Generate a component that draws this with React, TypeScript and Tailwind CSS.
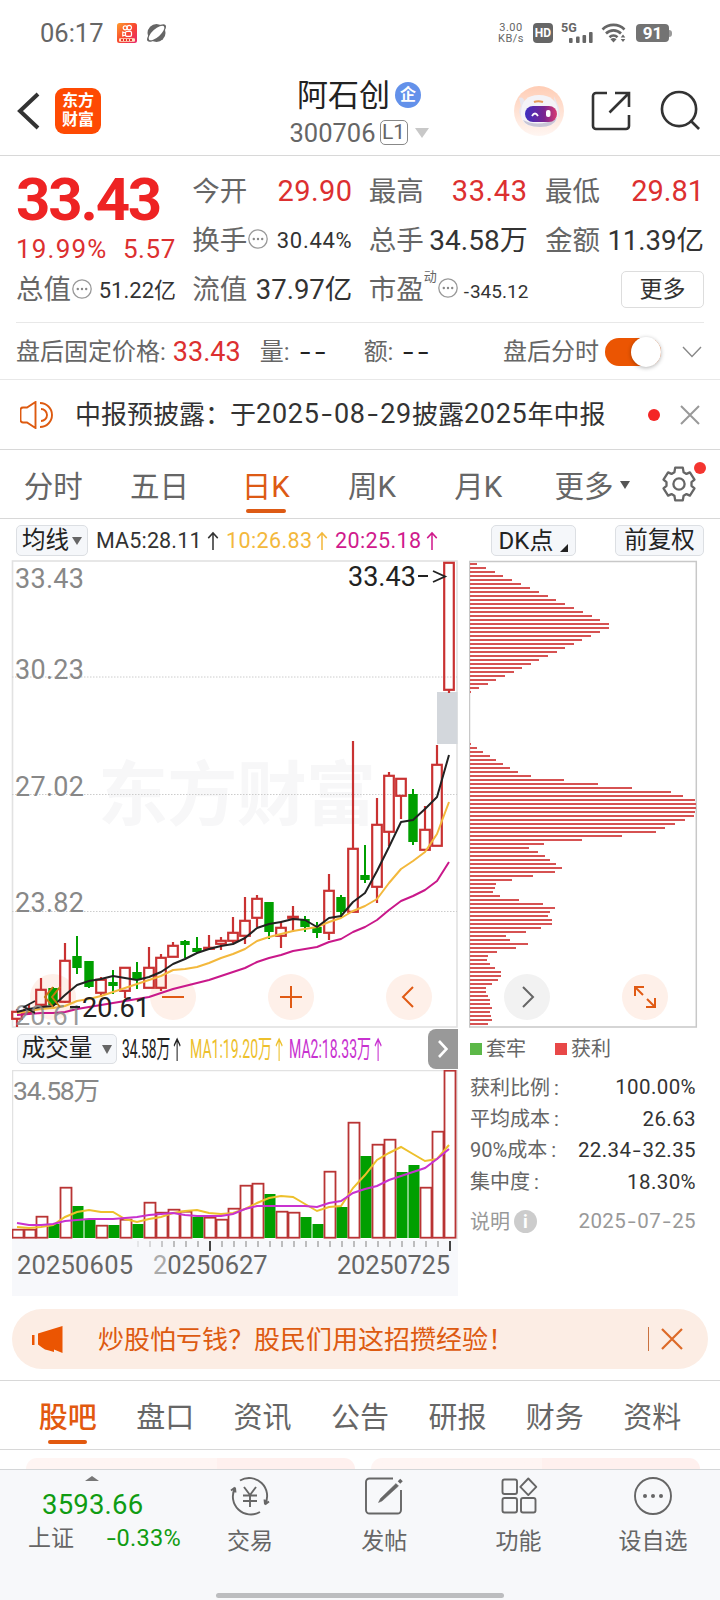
import React, { useState } from "react";
import type { ReactNode } from "react";

type Candle = [high: number, top: number, bottom: number, low: number, up: 0 | 1];

// daily candles, y values on the chart canvas
const candles: Candle[] = [
  [1009, 1011, 1019, 1027, 1], [1004, 1009, 1013, 1015, 1], [978, 989, 1005, 1006, 1], [987, 988, 1005, 1006, 0],
  [943, 960, 1002, 1003, 1], [936, 956, 968, 974, 0], [961, 961, 987, 988, 0], [977, 979, 993, 997, 1],
  [970, 982, 986, 994, 0], [967, 967, 991, 998, 1], [962, 972, 980, 989, 0], [947, 967, 988, 988, 1],
  [954, 957, 988, 991, 1], [942, 945, 957, 957, 1], [940, 941, 945, 958, 0], [937, 948, 952, 953, 0],
  [935, 947, 949, 950, 1], [937, 940, 944, 950, 1], [917, 932, 941, 943, 1], [897, 920, 936, 944, 1],
  [895, 898, 918, 927, 1], [902, 902, 932, 939, 0], [921, 927, 936, 948, 1], [906, 916, 918, 932, 1],
  [916, 919, 927, 932, 0], [922, 927, 933, 938, 0], [874, 890, 933, 940, 1], [895, 897, 912, 917, 0],
  [741, 848, 912, 912, 1], [845, 875, 880, 883, 0], [798, 824, 887, 903, 1], [772, 775, 832, 846, 1],
  [778, 778, 796, 819, 1], [789, 794, 842, 845, 0], [806, 829, 850, 850, 1], [745, 764, 846, 846, 1],
  [562, 562, 690, 693, 1],
];

const ma5 = [1012, 1009, 1007, 1006, 995, 985, 981, 979, 976, 978, 980, 977, 972, 964, 959, 953, 949, 946, 944, 938, 928, 924, 922, 919, 920, 927, 918, 916, 902, 893, 871, 847, 822, 820, 809, 797, 755];
const ma10 = [1013, 1011, 1009, 1008, 1006, 1001, 999, 996, 992, 988, 984, 980, 976, 970, 969, 967, 963, 958, 954, 949, 941, 937, 934, 931, 929, 927, 922, 918, 911, 906, 899, 883, 869, 861, 852, 834, 802];
const ma20 = [1015, 1014, 1013, 1013, 1012, 1009, 1007, 1005, 1003, 1001, 999, 997, 993, 989, 986, 983, 980, 976, 972, 968, 962, 958, 955, 951, 949, 947, 942, 939, 932, 927, 920, 910, 901, 896, 890, 881, 862];

// cost distribution, one bar every 4px from the top
const chips = [
  7, 16, 25, 33, 42, 51, 60, 69, 78, 86, 95, 104, 113, 122, 130, 139, 139, 130, 121, 112, 104, 95, 87, 78, 69, 61, 52, 44, 35, 26, 18, 9,
  1, 0, 0, 0, 0, 0, 0, 0, 0, 0, 0, 0, 0, 1,
  7, 13, 20, 26, 33, 40, 48, 61, 94, 128, 162, 201, 213, 225, 226, 226, 225, 224, 215, 205, 195, 186, 152, 112, 74, 59, 68, 75, 80, 86, 92, 85, 63, 42,
  26, 25, 23, 30, 49, 73, 85, 80, 78, 82, 82, 71, 56, 36, 40, 58, 46, 27, 18, 17, 20, 25, 31, 31, 28, 22, 16, 16, 18, 20, 20, 22, 20, 21, 22, 18,
];

// volume bars, height above the base line
const volumes = [9, 9, 22, 14, 51, 32, 18, 13, 13, 19, 14, 36, 26, 29, 27, 21, 21, 19, 30, 53, 55, 44, 27, 26, 21, 14, 67, 31, 116, 82, 94, 99, 66, 73, 51, 107, 168];
const volGreen = [3, 5, 6, 8, 10, 15, 21, 24, 25, 27, 29, 32, 33];
const volMa1 = [11, 10, 11, 13, 21, 26, 28, 26, 26, 19, 16, 19, 21, 25, 27, 28, 25, 24, 25, 29, 35, 40, 42, 41, 34, 27, 31, 32, 50, 63, 78, 85, 91, 84, 77, 79, 93];
const volMa2 = [15, 13, 13, 14, 17, 18, 19, 19, 19, 20, 21, 23, 24, 25, 23, 22, 22, 22, 24, 29, 32, 32, 32, 32, 32, 31, 35, 37, 45, 49, 52, 58, 62, 66, 70, 79, 89];

const toPoints = (ys: number[], x0: number) => ys.map((y, i) => `${x0 + i * 12},${y}`).join(" ");

function MoreDots() {
  return (
    <svg className="w-5 h-5 shrink-0 -mt-[3px] ml-px" viewBox="0 0 20 20">
      <circle cx="10" cy="10" r="9.2" fill="none" stroke="#999" strokeWidth="1.3" />
      <circle cx="5.800" cy="10" r="1.200" fill="#888" />
      <circle cx="10" cy="10" r="1.200" fill="#888" />
      <circle cx="14.200" cy="10" r="1.200" fill="#888" />
    </svg>
  );
}

function StatusBar() {
  return (
    <div className="h-[66px] flex items-center pl-[40px] pr-[48px] text-[#666]">
      <span className="text-[25.500px] leading-none pt-0.5">06:17</span>
      <svg className="w-5 h-5 ml-[13px]" viewBox="0 0 20 20">
        <defs>
          <linearGradient id="ks" x1="0" y1="0" x2="1" y2="1">
            <stop offset="0" stopColor="#ff9d2e" />
            <stop offset="0.5" stopColor="#f8492f" />
            <stop offset="1" stopColor="#e8256e" />
          </linearGradient>
        </defs>
        <rect width="20" height="20" rx="2.500" fill="url(#ks)" />
        <g fill="none" stroke="#fff" strokeWidth="1.200">
          <circle cx="8.200" cy="4.800" r="2" />
          <circle cx="12.200" cy="4.600" r="2.300" />
          <rect x="8.500" y="8.400" width="6" height="5" rx="1.400" />
          <path d="M8.500 10 5.800 9v4l2.700-1" />
        </g>
        <rect x="2" y="15.200" width="16" height="3.600" rx="1" fill="#ffe4c4" />
        <path d="M4 17h12" stroke="#e8352e" strokeWidth="2" strokeDasharray="2 1" />
      </svg>
      <svg className="w-[21px] h-5 ml-[9px]" viewBox="0 0 21 20">
        <circle cx="10.500" cy="10" r="9" fill="#666" />
        <ellipse cx="10.500" cy="10" rx="12" ry="4.800" transform="rotate(-42 10.500 10)" fill="#666" />
        <ellipse cx="10.500" cy="10" rx="10" ry="4" transform="rotate(-42 10.500 10)" fill="#fff" />
      </svg>
      <div className="ml-auto flex items-center">
        <div className="text-[11px] leading-[11px] text-center tracking-[0.500px]">
          <div>3.00</div>
          <div>KB/s</div>
        </div>
        <div className="ml-[9px] w-5 h-5 rounded-[4px] bg-[#666] text-white text-[12px] font-bold flex items-center justify-center leading-none">HD</div>
        <div className="ml-2 relative w-[32px] h-5">
          <span className="absolute left-0 -top-[1px] text-[12.500px] leading-none font-bold">5G</span>
          <svg className="absolute inset-0 w-[32px] h-5" viewBox="0 0 32 20" fill="#666">
            <rect x="8" y="15" width="3.600" height="5" rx="1" />
            <rect x="15" y="13.500" width="3.600" height="6.500" rx="1" />
            <rect x="21.500" y="12" width="3.600" height="8" rx="1" />
            <rect x="28" y="9" width="3.600" height="11" rx="1" />
          </svg>
        </div>
        <svg className="ml-[8px] w-[26px] h-5" viewBox="0 0 26 20">
          <g fill="none" stroke="#666" strokeWidth="2.600">
            <path d="M1.500 6.500a15.500 15.500 0 0 1 22 0" />
            <path d="M5 10.500a10.500 10.500 0 0 1 15 0" />
            <path d="M8.500 14.200a5.800 5.800 0 0 1 8 0" />
          </g>
          <path d="m12.500 19.500-3-3.200a4.500 4.500 0 0 1 6 0z" fill="#666" />
          <path d="m22 11.500 2.300 3h-4.600zM22 19l2.300-3h-4.600z" fill="#666" />
        </svg>
        <div className="ml-[9px] w-[33px] h-[18px] rounded-[4px] bg-[#737373] text-white text-[17px] font-bold flex items-center justify-center leading-none">91</div>
        <div className="w-[3px] h-[7px] bg-[#999] rounded-r-sm" />
      </div>
    </div>
  );
}

function Header() {
  return (
    <div className="h-[90px] border-b border-[#d8d8d8] flex items-center">
      <div className="flex-1 flex items-center pl-[17px]">
        <svg className="w-[24px] h-[38px]" viewBox="0 0 24 38">
          <path d="M21 2 3 19l18 17" fill="none" stroke="#333" strokeWidth="4" />
        </svg>
        <div className="ml-[14px] w-[46px] h-[46px] rounded-[9px] bg-[#fe4a03] text-white text-[16px] leading-[18.500px] font-bold text-center flex flex-col justify-center">
          <div>东方</div>
          <div>财富</div>
        </div>
      </div>
      <div className="flex flex-col items-center pt-[6px]">
        <div className="flex items-center h-[38px]">
          <span className="text-[31px] leading-none pt-0.5 text-[#222]">阿石创</span>
          <span className="ml-[5px] w-[26px] h-[26px] rounded-full bg-[#6391ea] text-white text-[16px] font-bold flex items-center justify-center leading-none">企</span>
        </div>
        <div className="flex items-center h-[38px]">
          <span className="text-[25.500px] leading-none pt-0.5 text-[#666]">300706</span>
          <span className="ml-[4px] w-[28px] h-[25px] rounded-[5px] border border-[#888] text-[#666] text-[21px] leading-none flex items-center justify-center">L1</span>
          <svg className="ml-[7px] w-[14px] h-[10px]" viewBox="0 0 14 10"><path d="M0 0h14L7 10z" fill="#c8c8c8" /></svg>
        </div>
      </div>
      <div className="flex-1 flex items-center justify-end pr-[19px]">
        <svg className="w-[50px] h-[50px]" viewBox="0 0 50 50">
          <defs>
            <linearGradient id="botBg" x1="0" y1="0" x2="0" y2="1">
              <stop offset="0" stopColor="#ffcdb5" />
              <stop offset="1" stopColor="#fff6f2" />
            </linearGradient>
            <linearGradient id="visor">
              <stop offset="0" stopColor="#3d2fc0" />
              <stop offset="0.6" stopColor="#7a2590" />
              <stop offset="1" stopColor="#d83a72" />
            </linearGradient>
          </defs>
          <circle cx="25" cy="25" r="25" fill="url(#botBg)" />
          <path d="M5 12q4-2 6 4L8 32q-5-6-1-12zM40 10l5 12 1 10-5-6z" fill="#e9e6ee" />
          <path d="M7 28c0-13 6-19 18-19s19 6 19 19c0 9-7 13-19 13S7 37 7 28z" fill="#f4f3f7" />
          <path d="M9 34q16 8 34-2-3 9-17 9t-17-7z" fill="#c9c6d6" />
          <rect x="11" y="20" width="32" height="16" rx="8" fill="url(#visor)" />
          <path d="M18 30q3-5 6 0" fill="none" stroke="#fff" strokeWidth="1.800" />
          <rect x="32" y="24" width="4.500" height="7" rx="2" fill="#fff" />
          <path d="M20 16q4-1.500 9 0" stroke="#e79a5a" strokeWidth="2.200" fill="none" />
        </svg>
        <svg className="ml-[27px] w-[40px] h-[40px]" viewBox="0 0 40 40" fill="none" stroke="#333" strokeWidth="2.600">
          <path d="M16 2H5a3 3 0 0 0-3 3v30a3 3 0 0 0 3 3h30a3 3 0 0 0 3-3V24" />
          <path d="M24 2h14v14M38 2 18.500 21.500" />
        </svg>
        <svg className="ml-[29px] w-[41px] h-[41px]" viewBox="0 0 42 42" fill="none" stroke="#333" strokeWidth="2.700">
          <circle cx="19.500" cy="19.500" r="17.500" />
          <path d="m31 31 9 9" />
        </svg>
      </div>
    </div>
  );
}

function QuoteRow({ label, children }: { label: ReactNode; children: ReactNode }) {
  return (
    <div className="h-[49px] flex items-center whitespace-nowrap">
      <span className="text-[27.500px] leading-none text-[#666]">{label}</span>
      {children}
    </div>
  );
}

function Quote() {
  return (
    <div className="mx-4 h-[167px] pt-[11px] border-b border-[#e8e8e8] flex justify-between">
      <div className="w-[160px] whitespace-nowrap">
        <div className="h-[66px] flex items-center text-[60px] leading-none font-bold tracking-[-2.200px] text-[#ee2323]">33.43</div>
        <div className="h-[32px] flex items-center justify-between text-[26px] leading-none text-[#dc3030]">
          <span className="tracking-[1.200px]">19.99%</span>
          <span className="tracking-[0.600px]">5.57</span>
        </div>
        <div className="h-[50px] flex items-center">
          <span className="text-[27.500px] leading-none text-[#666]">总值</span>
          <MoreDots />
          <span className="ml-auto text-[22px] leading-none pt-0.5 text-[#333]">51.22亿</span>
        </div>
      </div>
      <div className="w-[160px]">
        <QuoteRow label="今开"><span className="ml-auto text-[29px] leading-none tracking-[0.400px] text-[#dc3030]">29.90</span></QuoteRow>
        <QuoteRow label="换手"><MoreDots /><span className="ml-auto text-[22px] leading-none tracking-[0.700px] text-[#333]">30.44%</span></QuoteRow>
        <QuoteRow label="流值"><span className="ml-auto text-[27.500px] leading-none text-[#333]">37.97亿</span></QuoteRow>
      </div>
      <div className="w-[160px]">
        <QuoteRow label="最高"><span className="ml-auto mr-px text-[29px] leading-none tracking-[0.600px] text-[#dc3030]">33.43</span></QuoteRow>
        <QuoteRow label="总手"><span className="ml-auto mr-px text-[28px] leading-none text-[#333]">34.58万</span></QuoteRow>
        <QuoteRow label="市盈">
          <span className="self-start mt-[5px] text-[13px] leading-none text-[#666]">动</span>
          <MoreDots />
          <span className="ml-[6px] text-[19px] leading-none text-[#333] mt-1">
            <span className="pr-px">-</span>345.12
          </span>
        </QuoteRow>
      </div>
      <div className="w-[159px]">
        <QuoteRow label="最低"><span className="ml-auto text-[29px] leading-none text-[#dc3030]">29.81</span></QuoteRow>
        <QuoteRow label="金额"><span className="ml-auto text-[27.500px] leading-none text-[#333]">11.39亿</span></QuoteRow>
        <div className="h-[49px] flex items-center justify-end">
          <button className="w-[83px] h-[37px] rounded-[5px] border border-[#ddd] text-[23px] leading-none text-[#333]">更多</button>
        </div>
      </div>
    </div>
  );
}

function Blank({ className = "" }: { className?: string }) {
  return (
    <span className={`ml-[10px] text-[27px] leading-none text-[#222] whitespace-nowrap ${className}`}>
      <span className="inline-block scale-x-140 origin-left w-[15px]">-</span>
      <span className="inline-block scale-x-140 origin-left">-</span>
    </span>
  );
}

function AfterHours() {
  const [on, setOn] = useState(true);
  return (
    <div className="h-[57px] border-b border-[#e8e8e8] pl-4 pr-[18px] pt-0.5 flex items-center text-[24px] leading-none text-[#666] whitespace-nowrap">
      <span>盘后固定价格:</span>
      <span className="ml-[7px] w-[87px] text-[27px] leading-none text-[#dc3030]">33.43</span>
      <span>量:</span>
      <Blank className="w-[64px]" />
      <span>额:</span>
      <Blank />
      <span className="ml-auto">盘后分时</span>
      <button onClick={() => setOn(!on)} className={`ml-[6px] w-[56px] h-[28px] rounded-full flex items-center ${on ? "bg-[#eb5502] justify-end" : "bg-[#ccc] justify-start"}`}>
        <span className="w-[30px] h-[30px] rounded-full bg-white shadow-[0_1px_4px_rgba(0,0,0,0.3)]" />
      </button>
      <svg className="ml-[21px] w-5 h-3" viewBox="0 0 20 12"><path d="m1 1 9 9.500L19 1" fill="none" stroke="#888" strokeWidth="1.400" /></svg>
    </div>
  );
}

function Notice() {
  return (
    <div className="h-[70px] border-b border-[#d8d8d8] pl-5 pr-5 flex items-center whitespace-nowrap text-[26px] leading-none text-[#333]">
      <svg className="w-[34px] h-[28px]" viewBox="0 0 34 28" fill="none" stroke="#dd5a10" strokeWidth="1.900">
        <path d="M15.500 1v26L7 21.500H3a2.500 2.500 0 0 1-2.500-2.500V9A2.500 2.500 0 0 1 3 6.500h4z" />
        <path d="M21 8a6 6 0 0 1 0 12M20 2a12 12 0 0 1 0 24" />
      </svg>
      <span className="ml-[21px]">中报预披露：</span>
      <span className="-ml-px">于</span>
      <span className="text-[27px] leading-none tracking-[0.700px]">
        2025<Hyphen />08<Hyphen />29
      </span>
      <span>披露</span>
      <span className="text-[27px] leading-none tracking-[0.700px]">2025</span>
      <span>年中报</span>
      <span className="ml-auto w-3 h-3 rounded-full bg-[#f42525]" />
      <svg className="ml-[20px] w-5 h-5" viewBox="0 0 20 20"><path d="m1 1 18 18M19 1 1 19" stroke="#999" strokeWidth="2" /></svg>
    </div>
  );
}

// wide hyphen used between date parts
function Hyphen({ className = "mx-[3.500px]" }: { className?: string }) {
  return <span className={`inline-block scale-x-140 tracking-normal ${className}`}>-</span>;
}

const periods = ["分时", "五日", "日K", "周K", "月K"];

function PeriodTabs() {
  const [active, setActive] = useState("日K");
  return (
    <div className="h-[69px] border-b border-[#d8d8d8] flex text-[#666] text-[29.500px] leading-none">
      {periods.map((p) => (
        <button key={p} onClick={() => setActive(p)} className={`w-[106.300px] pt-[7px] relative flex items-center justify-center ${active === p ? "text-[#dd5a14]" : ""}`}>
          {p}
          {active === p && <span className="absolute bottom-[5px] w-10 h-1 rounded-full bg-[#dd5a14]" />}
        </button>
      ))}
      <button className="ml-[23px] pt-[7px] flex items-center">
        更多
        <svg className="ml-[6px] -mt-1.5 w-[10px] h-[8px]" viewBox="0 0 10 8"><path d="M0 0h10L5 8z" fill="#555" /></svg>
      </button>
      <div className="relative ml-[31px] self-center w-[36px] h-[36px]">
        <svg className="w-[36px] h-[36px]" viewBox="0 0 36 36" fill="none" stroke="#666" strokeWidth="2.300">
          <path d="M14.200 1.600h7.600l.8 4.600 2.900 1.700 3.400-1.500 4.600 7.200-3 2.600v3.600l3 2.600-4.600 7.200-3.400-1.500-2.900 1.700-.8 4.600h-7.600l-.8-4.600-2.900-1.700-3.400 1.500-4.600-7.200 3-2.600v-3.600l-3-2.600 4.600-7.200 3.400 1.500 2.900-1.700z" strokeLinejoin="round" />
          <circle cx="18" cy="18" r="5.600" />
        </svg>
        <span className="absolute -right-[9px] -top-[4px] w-3 h-3 rounded-full bg-[#f43530]" />
      </div>
    </div>
  );
}

function MaRow() {
  return (
    <div className="h-[41px] pt-0.5 px-4 flex items-center text-[21.500px] leading-none whitespace-nowrap">
      <button className="w-[72px] h-[31px] rounded-[5px] border border-[#dcdfe3] bg-[#f5f7fa] text-[23.500px] leading-none text-[#222] flex items-center justify-center">
        均线
        <svg className="ml-[3px] w-[10px] h-[8px]" viewBox="0 0 10 8"><path d="M0 0h10L5 8z" fill="#666" /></svg>
      </button>
      <span className="ml-[8px] w-[130px] text-[#333] flex items-center tracking-[0.150px]">MA5:28.11<UpArrow className="ml-auto mr-[7px]" /></span>
      <span className="w-[109px] text-[#f3b83c] flex items-center tracking-[0.400px]">10:26.83<UpArrow className="ml-auto mr-[7px]" /></span>
      <span className="w-[109px] text-[#d01a8c] flex items-center tracking-[0.400px]">20:25.18<UpArrow className="ml-auto mr-[6px]" /></span>
      <button className="ml-auto w-[85px] h-[31px] rounded-[5px] border border-[#dcdfe3] bg-[#f5f7fa] text-[24px] leading-none text-[#222] flex items-center justify-center">
        DK点
        <svg className="ml-[7px] mt-[14px] w-[8px] h-[8px]" viewBox="0 0 8 8"><path d="M8 0v8H0z" fill="#222" /></svg>
      </button>
      <button className="ml-[39px] w-[89px] h-[31px] rounded-[5px] border border-[#dcdfe3] bg-[#f5f7fa] text-[23.500px] leading-none text-[#222]">前复权</button>
    </div>
  );
}

function UpArrow({ className = "" }: { className?: string }) {
  return (
    <svg className={`w-[12px] h-[19px] ${className}`} viewBox="0 0 12 20" fill="none" stroke="currentColor" strokeWidth="1.600">
      <path d="M6 20V2M1 7.500 6 2l5 5.500" />
    </svg>
  );
}

function CandleChart() {
  return (
    <svg className="block w-[446px] h-[468px] overflow-visible" viewBox="12 560 446 468" fontSize="27">
      <rect x="12.500" y="561" width="444.500" height="466" fill="none" stroke="#e2e2e2" strokeWidth="1.600" />
      <text x="98" y="820" fontSize="70" fontWeight="700" fill="#f7f7f8" textLength="278">东方财富</text>
      {[677, 794.5, 911.5].map((y) => (
        <line key={y} x1="12" x2="457" y1={y} y2={y} stroke="#ccc" strokeDasharray="1.500 1.500" />
      ))}
      <g fill="#888">
        <text x="15" y="588" textLength="69">33.43</text>
        <text x="15" y="679" textLength="69">30.23</text>
        <text x="15" y="796" textLength="69">27.02</text>
        <text x="15" y="912" textLength="69">23.82</text>
      </g>
      {[53, 173, 291, 409].map((cx) => (
        <circle key={cx} cx={cx} cy="997" r="23" fill="#fef0e9" />
      ))}
      <rect x="437" y="692" width="20.500" height="52" fill="#d3d7dc" />
      {candles.map(([high, top, bottom, low, up], i) => {
        const x = 17 + i * 12;
        return up ? (
          <g key={i} stroke="#c93232" strokeWidth="2.200" fill="none">
            <path d={`M${x} ${high}V${top}M${x} ${bottom}V${low}`} />
            <rect x={x - 4.8} y={top + 0.8} width="9.600" height={Math.max(bottom - top - 1, 1)} />
          </g>
        ) : (
          <g key={i} fill="#009f00">
            <rect x={x - 1} y={high} width="2" height={low - high} />
            <rect x={x - 4.7} y={top} width="9.400" height={bottom - top} />
          </g>
        );
      })}
      <g fill="none" strokeWidth="2" strokeLinejoin="round">
        <polyline points={toPoints(ma20, 17)} stroke="#c9188a" />
        <polyline points={toPoints(ma10, 17)} stroke="#f3b83c" />
        <polyline points={toPoints(ma5, 17)} stroke="#222" />
      </g>
      <text x="15" y="1025" fill="#888" fillOpacity="0.850">20.61</text>
      <text x="82" y="1017" fill="#222">20.61</text>
      <path d="M35 1001 24 1007l11 6M70 1007h10" fill="none" stroke="#222" strokeWidth="1.800" />
      <text x="348" y="586" fill="#222">33.43</text>
      <path d="M418 576h10M433 571l12 5.500-12 5.500" fill="none" stroke="#222" strokeWidth="1.900" />
      <g fill="none" stroke="#e05a14" strokeWidth="2">
        <path d="m53 987-8 10 8 10M60 987l-8 10 8 10" stroke="#c77812" />
        <path d="M162 997h22M280 997h22M291 986v22M413 987l-10 10 10 10" />
      </g>
    </svg>
  );
}

function ChipChart() {
  return (
    <svg className="block w-[229px] h-[468px]" viewBox="469 560 229 468">
      <path d="M469.500 561.500H696.300V1027H469.500z" fill="none" stroke="#c8c8c8" strokeWidth="1.500" />
      {chips.map((w, i) => (
        <rect key={i} x="470" y={563 + i * 4} width={w} height="2" fill="#d65252" />
      ))}
      <circle cx="527" cy="997" r="23" fill="#f2f2f2" />
      <path d="m523 987 10 10-10 10" fill="none" stroke="#666" strokeWidth="2" />
      <circle cx="645" cy="997" r="23" fill="#fef0e9" />
      <path d="M635 996v-9h9M635 987l8 8M655 998v9h-9M655 1007l-8-8" fill="none" stroke="#e05a14" strokeWidth="2" />
    </svg>
  );
}

function NarrowArrow() {
  return (
    <svg className="ml-[6px] w-[14px] h-[24px]" viewBox="0 0 14 24" fill="none" stroke="currentColor" strokeWidth="2">
      <path d="M7 24V2M1 9l6-7 6 7" />
    </svg>
  );
}

function VolumeHeader() {
  return (
    <div className="h-[42px] pl-[5px] flex items-center whitespace-nowrap overflow-hidden">
      <button className="w-[100px] h-[30px] shrink-0 rounded-[5px] border border-[#dcdfe3] bg-[#f5f7fa] text-[23.500px] leading-none text-[#222] flex items-center justify-center">
        成交量
        <svg className="ml-[10px] w-[10px] h-[9px]" viewBox="0 0 10 9"><path d="M0 0h10L5 9z" fill="#666" /></svg>
      </button>
      <span className="ml-[5px] w-[68px] shrink-0 text-[26px] leading-none text-[#222]">
        <span className="flex w-max items-center origin-left scale-x-[0.530]">34.58万<NarrowArrow /></span>
      </span>
      <span className="w-[99px] shrink-0 text-[26px] leading-none text-[#edc02c]">
        <span className="flex w-max items-center origin-left scale-x-[0.540]">MA1:19.20万<NarrowArrow /></span>
      </span>
      <span className="w-[96px] shrink-0 text-[26px] leading-none text-[#c832d0]">
        <span className="flex w-max items-center origin-left scale-x-[0.540]">MA2:18.33万<NarrowArrow /></span>
      </span>
      <button className="ml-auto w-[30px] h-[40px] shrink-0 rounded-l-[8px] bg-[#999] flex items-center justify-center">
        <svg className="w-[10px] h-[18px]" viewBox="0 0 10 18"><path d="m1 1 7.500 8L1 17" fill="none" stroke="#fff" strokeWidth="2.600" /></svg>
      </button>
    </div>
  );
}

function VolumeChart() {
  const ticks = Array.from({ length: 27 }, (_, i) => 138 + i * 12);
  return (
    <svg className="block w-[446px] h-[226px]" viewBox="12 1070 446 226">
      <rect x="12" y="1239" width="446" height="57" fill="#f7f8fb" />
      <path d="M12.500 1239V1070.500H457V1239" fill="none" stroke="#e2e2e2" strokeWidth="1.500" />
      <text x="13" y="1100" fontSize="26.500" fill="#888" textLength="87">34.58万</text>
      {volumes.map((h, i) => {
        const x = 18 + i * 12;
        return volGreen.includes(i) ? (
          <rect key={i} x={x - 5.5} y={1238 - h} width="11" height={h} fill="#009f00" />
        ) : (
          <rect key={i} x={x - 5.5} y={1238.7 - h} width="11" height={h - 1} fill="#fff" stroke="#b93434" strokeWidth="1.800" />
        );
      })}
      <g fill="none" strokeWidth="2">
        <polyline points={toPoints(volMa1.map((v) => 1238 - v), 17)} stroke="#edc02c" />
        <polyline points={toPoints(volMa2.map((v) => 1238 - v), 17)} stroke="#c832d0" />
      </g>
      {ticks.map((x, i) => {
        const long = x === 210 || x === 450;
        return <line key={x} x1={x} x2={x} y1="1241" y2={long ? 1251 : 1247} stroke={long ? "#444" : "#aaa"} strokeWidth={long ? 2 : 1.5} opacity={i < 3 ? 0.3 + i * 0.25 : 1} />;
      })}
      <g fontSize="25.500" fill="#666">
        <text x="17" y="1274" textLength="116">20250605</text>
        <text x="153" y="1274"><tspan fill="#aaa">2</tspan>0250627</text>
        <text x="337" y="1274" textLength="113">20250725</text>
      </g>
    </svg>
  );
}

const stats = [
  ["获利比例:", "100.00%"],
  ["平均成本:", "26.63"],
  ["90%成本:", "22.34-32.35"],
  ["集中度:", "18.30%"],
];

function Dashed({ text }: { text: string }) {
  return (
    <>
      {text.split("-").map((part, i) => (
        <span key={i}>{i > 0 && <Hyphen className="mx-[2.700px]" />}{part}</span>
      ))}
    </>
  );
}

function ChipStats() {
  return (
    <div className="pl-px pr-[2px] text-[20px] leading-none text-[#666]">
      <div className="h-[44px] flex items-center pb-[3px]">
        <span className="w-3 h-3 bg-[#5cb848]" />
        <span className="ml-[4px] w-[69px]">套牢</span>
        <span className="w-3 h-3 bg-[#e84848]" />
        <span className="ml-[4px]">获利</span>
      </div>
      {stats.map(([label, value]) => (
        <div key={label} className="h-[31.400px] flex items-center justify-between">
          <span>{label.slice(0, -1)}<span className="ml-[4px]">:</span></span>
          <span className="text-[20.500px] tracking-[0.400px] text-[#333]"><Dashed text={value} /></span>
        </div>
      ))}
      <div className="mt-[7px] h-[34px] flex items-center text-[#999]">
        说明
        <span className="ml-[4px] w-[23px] h-[23px] rounded-full bg-[#ccc] text-white text-[18px] font-bold flex items-center justify-center">i</span>
        <span className="ml-auto text-[20.500px] tracking-[0.400px]"><Dashed text="2025-07-25" /></span>
      </div>
    </div>
  );
}

function Promo() {
  return (
    <div className="mt-[13px] mx-3 h-[60px] rounded-full bg-[#fcede4] pl-5 pr-[25px] flex items-center text-[#dd5a10]">
      <svg className="w-[31px] h-[27px]" viewBox="0 0 31 27" fill="#eb5502">
        <path d="M0 9h2.500v10H0zM6 7.500 30.500 0v27L22 23.500V26l-5-1.500-4-1-3-2-4-3z" />
      </svg>
      <span className="ml-[35px] pt-0.5 text-[26px] leading-none">炒股怕亏钱？股民们用这招攒经验！</span>
      <span className="ml-auto w-px h-[24px] bg-[#c9713f]" />
      <svg className="ml-[12px] w-[22px] h-[22px]" viewBox="0 0 22 22"><path d="m1 1 20 20M21 1 1 21" stroke="#dd6a28" strokeWidth="2.200" /></svg>
    </div>
  );
}

const sections = ["股吧", "盘口", "资讯", "公告", "研报", "财务", "资料"];

function SectionTabs() {
  const [active, setActive] = useState("股吧");
  return (
    <div className="mt-[11px] h-[70px] border-y border-[#d8d8d8] px-[19px] flex text-[29px] leading-none text-[#666]">
      {sections.map((s) => (
        <button key={s} onClick={() => setActive(s)} className={`flex-1 relative flex items-center justify-center pt-[7px] ${active === s ? "text-[#e2590f] font-medium" : ""}`}>
          {s}
          {active === s && <span className="absolute bottom-[5px] w-[39px] h-1 rounded-full bg-[#e2590f]" />}
        </button>
      ))}
    </div>
  );
}

function NavItem({ label, children }: { label: string; children: ReactNode }) {
  return (
    <div className="w-[134.300px] flex flex-col items-center">
      <svg className="mt-[6px] w-[44px] h-[40px]" viewBox="0 0 44 40" fill="none" stroke="#666" strokeWidth="1.900">{children}</svg>
      <span className="mt-[14px] text-[23px] leading-none text-[#666]">{label}</span>
    </div>
  );
}

function BottomNav() {
  return (
    <div className="h-[131px] border-t border-[#d4d6d8] bg-[#f7f8fa] flex flex-col">
      <div className="h-[123px] flex">
        <div className="w-[183px] pl-[28px] text-[#109c12]">
          <svg className="mt-[6px] ml-[57px] w-[14px] h-[5px]" viewBox="0 0 14 5"><path d="M7 0l7 5H0z" fill="#777" /></svg>
          <div className="mt-[10px] ml-[14px] text-[27.500px] leading-none tracking-[0.200px]">3593.66</div>
          <div className="mt-[8px] flex items-center justify-between w-[153px] leading-none">
            <span className="text-[23px] text-[#666]">上证</span>
            <span className="text-[23.500px] tracking-[0.300px]"><Hyphen className="mr-[2px]" />0.33%</span>
          </div>
        </div>
        <NavItem label="交易">
          <path d="M12 4.500a18 18 0 0 1 25 24M37 28.500l4-3M37 28.500l-.5-5M32 36a18 18 0 0 1-25-24M7 11.500l-4 3M7 11.500l.5 5" />
          <path d="m16 11 6 8 6-8M22 19v12M15 19.500h14M15 25h14" />
        </NavItem>
        <NavItem label="发帖">
          <path d="M31 2.500H7.500a3.500 3.500 0 0 0-3.500 3.500v28a3.500 3.500 0 0 0 3.500 3.500h28a3.500 3.500 0 0 0 3.500-3.500V14" />
          <path d="M16.500 26.500l2-4L34 7.500l2.500 2.500L20 25z" fill="#666" strokeWidth="0.500" />
          <path d="m37 6.500 2.500-2.500" strokeWidth="3.500" />
        </NavItem>
        <NavItem label="功能">
          <rect x="5.500" y="3.500" width="14.500" height="14.500" rx="2" />
          <rect x="5.500" y="22" width="14.500" height="14.500" rx="2" />
          <rect x="24" y="22" width="14.500" height="14.500" rx="2" />
          <path d="m31.300 2.500 8 8.300-8 8.300-8-8.300z" strokeLinejoin="round" />
        </NavItem>
        <NavItem label="设自选">
          <circle cx="22" cy="20" r="18" />
          <g fill="#666" stroke="none">
            <circle cx="14" cy="20" r="2" />
            <circle cx="22" cy="20" r="2" />
            <circle cx="30" cy="20" r="2" />
          </g>
        </NavItem>
      </div>
      <div className="mx-auto w-[288px] h-[5px] rounded-full bg-[#bcbdbf]" />
    </div>
  );
}

export default function App() {
  return (
    <div className="w-[720px] h-[1600px] overflow-hidden bg-white flex flex-col font-['Roboto','Noto_Sans_CJK_SC',sans-serif] *:shrink-0">
      <StatusBar />
      <Header />
      <Quote />
      <AfterHours />
      <Notice />
      <PeriodTabs />
      <MaRow />
      <div className="flex pl-3">
        <div className="w-[446px]">
          <CandleChart />
          <VolumeHeader />
          <VolumeChart />
        </div>
        <div className="ml-[11px] w-[229px]">
          <ChipChart />
          <ChipStats />
        </div>
      </div>
      <Promo />
      <SectionTabs />
      {/* top edge of the topic cards behind the bar */}
      <div className="h-[19px] pl-[26px] pr-5 pt-[8px] flex gap-4">
        <div className="flex-1 rounded-t-[14px] bg-linear-to-r from-[#fff5f3] from-58% to-[#fff0ee] to-58%" />
        <div className="flex-1 rounded-t-[14px] bg-linear-to-r from-[#fff5f3] from-52% to-[#fff0ee] to-52%" />
      </div>
      <BottomNav />
    </div>
  );
}
